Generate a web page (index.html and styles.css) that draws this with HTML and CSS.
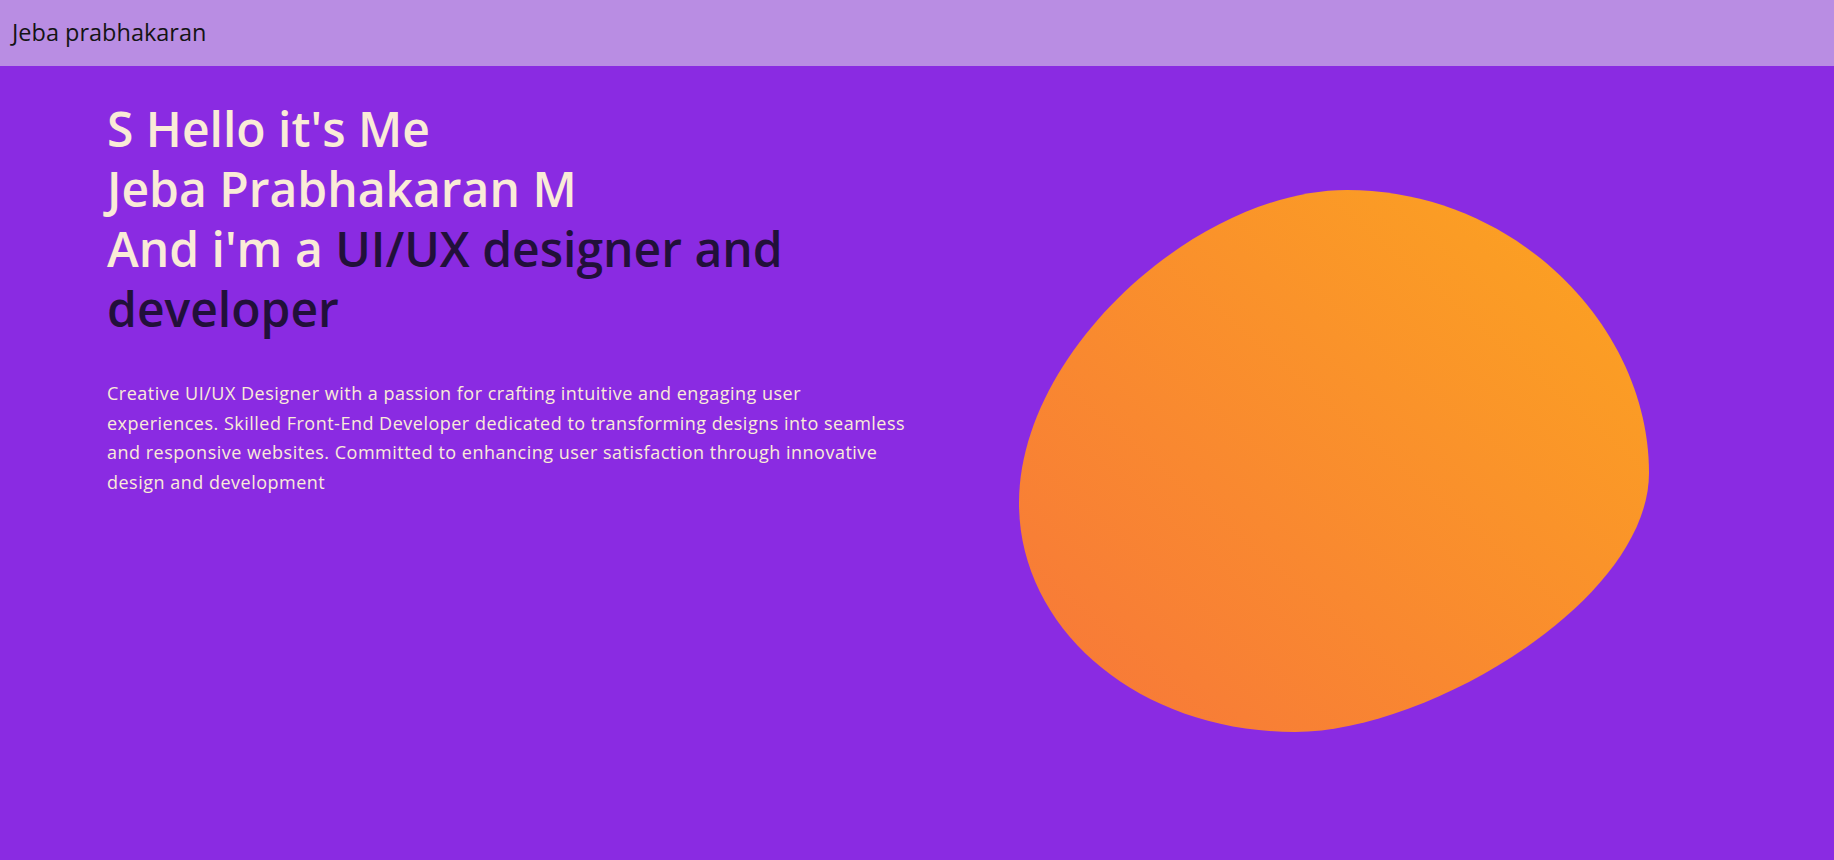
FILE: index.html
```html
<!DOCTYPE html>
<html lang="en">
<head>
<meta charset="utf-8">
<title>Jeba prabhakaran</title>
<link rel="stylesheet" href="styles.css">
</head>
<body>
<header class="topbar">
  <div class="brand">Jeba prabhakaran</div>
</header>
<main class="hero">
  <section class="intro">
    <h1 class="headline">
      <span class="line">S Hello it's Me</span>
      <span class="line">Jeba Prabhakaran M</span>
      <span class="line">And i'm a <span class="role">UI/UX designer and developer</span></span>
    </h1>
    <p class="summary">Creative UI/UX Designer with a passion for crafting intuitive and engaging user experiences. Skilled Front-End Developer dedicated to transforming designs into seamless and responsive websites. Committed to enhancing user satisfaction through innovative design and development</p>
  </section>
  <div class="visual">
    <svg class="blob" viewBox="0 0 630 542" width="630" height="542" aria-hidden="true">
      <defs>
        <linearGradient id="blobGrad" x1="1" y1="0" x2="0" y2="1">
          <stop offset="0" stop-color="#fca520"/>
          <stop offset="1" stop-color="#f7763a"/>
        </linearGradient>
      </defs>
      <path d="M328,0 C180,0 0,160 0,313 C0,440 120,542 276,542 C410,542 630,410 630,283 C630,135 495,0 328,0 Z" fill="url(#blobGrad)"/>
    </svg>
  </div>
</main>
</body>
</html>
```
FILE: styles.css
```css
html, body {
  margin: 0;
  padding: 0;
}
body {
  background: #8a2be2;
  font-family: "Open Sans", "Noto Sans", sans-serif;
  min-height: 860px;
}
.topbar {
  height: 66px;
  background: #b98de3;
  display: flex;
  align-items: center;
  padding-left: 12px;
}
.brand {
  font-size: 23.5px;
  color: #141414;
  padding-bottom: 2px;
}
.hero {
  display: flex;
  align-items: flex-start;
}
.intro {
  width: 800px;
  flex: none;
  padding-left: 107px;
  padding-top: 33px;
}
.headline {
  margin: 0;
  font-size: 48px;
  font-weight: 600;
  line-height: 60px;
  color: #faebd7;
}
.line {
  display: block;
}
.role {
  color: #22103a;
}
.summary {
  margin: 40px 0 0;
  font-size: 18px;
  letter-spacing: 0.5px;
  line-height: 29.6px;
  color: #faebd7;
}
.visual {
  margin-left: 112px;
  margin-top: 124px;
}
.blob {
  display: block;
}
```
